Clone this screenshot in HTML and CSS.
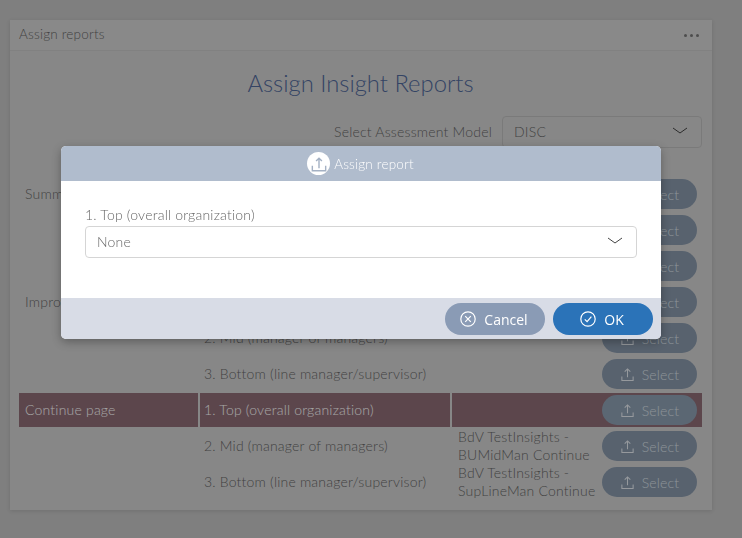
FILE: index.html
```html
<!DOCTYPE html>
<html lang="en">
<head>
    <meta charset="UTF-8">
    <meta name="viewport" content="width=device-width, initial-scale=1.0">
    <title>Assign reports</title>
    <link rel="stylesheet" href="styles.css">
</head>
<body>
    <div class="card">
        <div class="card-header">
            <span>Assign reports</span>
            <span class="dots"><i></i><i></i><i></i></span>
        </div>
        <div class="card-body">
            <h1>Assign Insight Reports</h1>
            <div class="model-row">
                <label>Select Assessment Model</label>
                <div class="select model-select">
                    <span>DISC</span>
                    <svg class="chevron" viewBox="0 0 16 8"><path d="M1 1l7 5 7-5"/></svg>
                </div>
            </div>
            <table class="report-table">
                <tr>
                    <td class="page-col">Summary page</td>
                    <td class="level-col">1. Top (overall organization)</td>
                    <td class="report-col"></td>
                    <td class="action-col"><button class="select-btn"><svg class="upload" viewBox="0 0 16 16"><path d="M8 11V2M5 5l3-3 3 3M2 10v4.500h12V10"/></svg>Select</button></td>
                </tr>
                <tr>
                    <td class="page-col"></td>
                    <td class="level-col">2. Mid (manager of managers)</td>
                    <td class="report-col"></td>
                    <td class="action-col"><button class="select-btn"><svg class="upload" viewBox="0 0 16 16"><path d="M8 11V2M5 5l3-3 3 3M2 10v4.500h12V10"/></svg>Select</button></td>
                </tr>
                <tr>
                    <td class="page-col"></td>
                    <td class="level-col">3. Bottom (line manager/supervisor)</td>
                    <td class="report-col"></td>
                    <td class="action-col"><button class="select-btn"><svg class="upload" viewBox="0 0 16 16"><path d="M8 11V2M5 5l3-3 3 3M2 10v4.500h12V10"/></svg>Select</button></td>
                </tr>
                <tr>
                    <td class="page-col">Improve page</td>
                    <td class="level-col">1. Top (overall organization)</td>
                    <td class="report-col"></td>
                    <td class="action-col"><button class="select-btn"><svg class="upload" viewBox="0 0 16 16"><path d="M8 11V2M5 5l3-3 3 3M2 10v4.500h12V10"/></svg>Select</button></td>
                </tr>
                <tr>
                    <td class="page-col"></td>
                    <td class="level-col">2. Mid (manager of managers)</td>
                    <td class="report-col"></td>
                    <td class="action-col"><button class="select-btn"><svg class="upload" viewBox="0 0 16 16"><path d="M8 11V2M5 5l3-3 3 3M2 10v4.500h12V10"/></svg>Select</button></td>
                </tr>
                <tr>
                    <td class="page-col"></td>
                    <td class="level-col">3. Bottom (line manager/supervisor)</td>
                    <td class="report-col"></td>
                    <td class="action-col"><button class="select-btn"><svg class="upload" viewBox="0 0 16 16"><path d="M8 11V2M5 5l3-3 3 3M2 10v4.500h12V10"/></svg>Select</button></td>
                </tr>
                <tr class="missing">
                    <td class="page-col">Continue page</td>
                    <td class="level-col">1. Top (overall organization)</td>
                    <td class="report-col"></td>
                    <td class="action-col"><button class="select-btn"><svg class="upload" viewBox="0 0 16 16"><path d="M8 11V2M5 5l3-3 3 3M2 10v4.500h12V10"/></svg>Select</button></td>
                </tr>
                <tr>
                    <td class="page-col"></td>
                    <td class="level-col">2. Mid (manager of managers)</td>
                    <td class="report-col"><span>BdV TestInsights - BUMidMan Continue</span></td>
                    <td class="action-col"><button class="select-btn"><svg class="upload" viewBox="0 0 16 16"><path d="M8 11V2M5 5l3-3 3 3M2 10v4.500h12V10"/></svg>Select</button></td>
                </tr>
                <tr>
                    <td class="page-col"></td>
                    <td class="level-col">3. Bottom (line manager/supervisor)</td>
                    <td class="report-col"><span>BdV TestInsights - SupLineMan Continue</span></td>
                    <td class="action-col"><button class="select-btn"><svg class="upload" viewBox="0 0 16 16"><path d="M8 11V2M5 5l3-3 3 3M2 10v4.500h12V10"/></svg>Select</button></td>
                </tr>
            </table>
        </div>
    </div>

    <div class="overlay"></div>

    <div class="modal">
        <div class="modal-header">
            <span class="modal-icon"><svg viewBox="0 0 24 24"><path d="M12 17V5M8.500 8.500L12 5l3.500 3.500M4 14v6h16v-6"/></svg></span>
            <span>Assign report</span>
        </div>
        <div class="modal-body">
            <label>1. Top (overall organization)</label>
            <div class="select">
                <span>None</span>
                <svg class="chevron" viewBox="0 0 16 8"><path d="M1 1l7 5 7-5"/></svg>
            </div>
        </div>
        <div class="modal-footer">
            <button class="btn btn-cancel">
                <svg viewBox="0 0 18 18"><circle cx="9" cy="9" r="7.200"/><path d="M6.200 6.200l5.600 5.600M11.800 6.200l-5.600 5.600"/></svg>
                Cancel
            </button>
            <button class="btn btn-ok">
                <svg viewBox="0 0 18 18"><circle cx="9" cy="9" r="7.200"/><path d="M5.800 9.300l2.300 2.400 4.300-5"/></svg>
                OK
            </button>
        </div>
    </div>
</body>
</html>
```

FILE: styles.css
```css
* {
    margin: 0;
    padding: 0;
    box-sizing: border-box;
}

body {
    background: #c3c3c3;
    color: #666;
    font-family: 'Lato', sans-serif;
    font-weight: 300;
    font-size: 14px;
    letter-spacing: 0.2px;
    height: 538px;
    overflow: hidden;
    padding: 20px 30px 0 10px;
}

.card {
    background: #d0d0d0;
    height: 490px;
    box-shadow: 0 1px 4px rgba(0, 0, 0, 0.12);
}

.card-header {
    height: 31px;
    padding: 0 13px 2px 9px;
    border-bottom: 1px solid #c6c6c6;
    background: #d3d3d3;
    display: flex;
    justify-content: space-between;
    align-items: center;
    font-size: 13.500px;
}

.dots {
    display: flex;
    gap: 3px;
    margin-top: 2px;
}

.dots i {
    width: 3px;
    height: 3px;
    border-radius: 50%;
    background: #777;
}

.card-body {
    padding: 0 10px 0 9px;
}

h1 {
    font-weight: 300;
    font-size: 23.800px;
    letter-spacing: 0;
    color: #50699a;
    text-align: center;
    line-height: 30px;
    padding-top: 17px;
    padding-bottom: 1px;
}

.model-row {
    display: flex;
    justify-content: flex-end;
    align-items: center;
    gap: 10px;
    margin-top: 17px;
}

.model-row label {
    padding-bottom: 2px;
}

.select {
    display: flex;
    justify-content: space-between;
    align-items: center;
    height: 32px;
    padding: 0 13px 2px 11px;
    background: #fff;
    border: 1px solid #d5d5d5;
    border-radius: 4px;
    color: #666;
}

.model-select {
    width: 200px;
    background: #d0d0d0;
    border-color: #bcbcbc;
}

.chevron {
    width: 16px;
    height: 8px;
    fill: none;
    stroke: #444;
    stroke-width: 1;
}

.report-table {
    width: 683px;
    margin-top: 27px;
    border-collapse: separate;
    border-spacing: 0 2px;
    table-layout: fixed;
}

.report-table td {
    height: 34px;
    padding: 0 4px;
    line-height: 18px;
}

.page-col {
    width: 181px;
    border-right: 2px solid #d0d0d0;
}

.report-table .page-col {
    padding-left: 6px;
}

.level-col {
    width: 252px;
    border-right: 2px solid #d0d0d0;
}

.report-col {
    width: 150px;
}

.report-col span {
    display: block;
    margin: -1px 0;
}

.report-table .report-col {
    padding: 0 0 0 6px;
}

.report-table .action-col {
    padding: 0 7px 0 0;
    text-align: right;
}

.missing td {
    background: #8e6c76;
    color: #fff;
}

.select-btn {
    display: inline-flex;
    justify-content: center;
    align-items: center;
    gap: 7px;
    width: 95px;
    height: 30px;
    border: none;
    border-radius: 15px;
    vertical-align: middle;
    background: #8797aa;
    color: #d9e0e8;
    font-family: inherit;
    font-weight: 300;
    font-size: 14px;
    letter-spacing: 0.2px;
}

.missing .select-btn {
    background: #8d9fb1;
}

.upload {
    width: 15px;
    height: 15px;
    fill: none;
    stroke: #e6ebf1;
    stroke-width: 1.100;
}

.overlay {
    position: fixed;
    top: 0;
    left: 0;
    right: 0;
    bottom: 0;
    background: rgba(0, 0, 0, 0.35);
}

.modal {
    position: absolute;
    left: 61px;
    top: 146px;
    width: 600px;
    height: 193px;
    border-radius: 5px;
    overflow: hidden;
    background: #fff;
    box-shadow: 0 3px 10px rgba(0, 0, 0, 0.3);
    display: flex;
    flex-direction: column;
}

.modal-header {
    height: 35px;
    background: #b0bccd;
    color: #fff;
    display: flex;
    justify-content: center;
    align-items: center;
    gap: 4px;
    font-size: 13.500px;
    padding-right: 1px;
}

.modal-icon {
    width: 23px;
    height: 23px;
    border-radius: 50%;
    background: #fff;
    display: flex;
    justify-content: center;
    align-items: center;
}

.modal-icon svg {
    width: 20px;
    height: 20px;
    fill: none;
    stroke: #a4b1c4;
    stroke-width: 1.700;
}

.modal-body {
    flex: 1;
    padding: 25px 24px 0;
}

.modal-body label {
    display: block;
    line-height: 18px;
    margin-bottom: 2px;
}

.modal-footer {
    height: 41px;
    background: #d8dce6;
    display: flex;
    justify-content: flex-end;
    gap: 8px;
    padding: 5px 8px 0 0;
}

.btn {
    display: flex;
    justify-content: center;
    align-items: center;
    gap: 7px;
    width: 100px;
    height: 32px;
    padding-right: 3px;
    border: none;
    border-radius: 16px;
    color: #fff;
    font-family: 'Open Sans', sans-serif;
    font-size: 14px;
    font-weight: 500;
    letter-spacing: 0;
}

.btn svg {
    width: 18px;
    height: 18px;
    fill: none;
    stroke: #fff;
    stroke-width: 1.200;
}

.btn-cancel {
    background: #8a9bb5;
}

.btn-ok {
    background: #2b73b8;
}
```
